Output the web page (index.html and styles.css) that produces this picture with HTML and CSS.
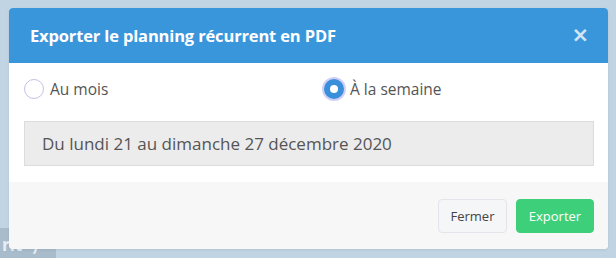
FILE: index.html
```html
<!DOCTYPE html>
<html lang="fr">
<head>
<meta charset="utf-8">
<link rel="stylesheet" href="styles.css">
</head>
<body>
<div class="backdrop-text">rit -)</div>
<div class="modal">
  <div class="modal-header">
    <h1 class="modal-title">Exporter le planning récurrent en PDF</h1>
    <span class="close">&times;</span>
  </div>
  <div class="modal-body">
    <div class="radios">
      <label class="radio"><span class="dot"></span>Au mois</label>
      <label class="radio"><span class="dot checked"></span>À la semaine</label>
    </div>
    <div class="field">Du lundi 21 au dimanche 27 décembre 2020</div>
  </div>
  <div class="modal-footer">
    <button class="btn btn-light">Fermer</button>
    <button class="btn btn-success">Exporter</button>
  </div>
</div>
</body>
</html>
```

FILE: styles.css
```css
html, body {
  margin: 0;
  padding: 0;
}
body {
  width: 616px;
  height: 258px;
  background: #c0d4e3;
  font-family: "Open Sans", "Noto Sans", sans-serif;
  position: relative;
  overflow: hidden;
  padding-top: 8px;
  box-sizing: border-box;
}
.backdrop-text {
  position: absolute;
  left: 0;
  top: 228px;
  width: 56px;
  height: 30px;
  background: #a8bccc;
  color: #e6eef4;
  font-size: 17px;
  font-weight: 700;
  line-height: 34px;
  padding-left: 2px;
  box-sizing: border-box;
  overflow: hidden;
}
.modal {
  position: relative;
  margin-left: 9px;
  width: 599px;
  background: #fff;
  border-radius: 4px;
  overflow: hidden;
  box-shadow: 0 1px 3px rgba(0,0,0,0.08);
}
.modal-header {
  height: 55px;
  background: #3a96db;
  display: flex;
  align-items: center;
  justify-content: space-between;
  padding: 0 19px 0 21px;
  box-sizing: border-box;
}
.modal-title {
  margin: 0;
  color: #fff;
  font-size: 16.5px;
  font-weight: 700;
  letter-spacing: -0.15px;
}
.close {
  color: #d3e6f6;
  font-size: 21px;
  font-weight: 700;
  line-height: 1;
  font-family: "DejaVu Sans", sans-serif;
}
.modal-body {
  padding: 15px 14px 16px 15px;
}
.radios {
  display: grid;
  grid-template-columns: 300px 1fr;
  height: 22px;
  align-items: center;
}
.radio {
  display: flex;
  align-items: center;
  gap: 6px;
  color: #555;
  font-size: 15.5px;
}
.dot {
  width: 20px;
  height: 20px;
  border-radius: 50%;
  border: 1px solid #c3c1e6;
  box-sizing: border-box;
  background: #fff;
}
.dot.checked {
  border: 6px solid #3a8fda;
  background: #fff;
  box-shadow: 0 0 0 2px rgba(170, 170, 240, 0.55);
}
.field {
  margin-top: 21px;
  height: 45px;
  box-sizing: border-box;
  background: #ececec;
  border: 1px solid #dcdcdc;
  color: #555;
  font-size: 17px;
  display: flex;
  align-items: center;
  padding-left: 17px;
}
.modal-footer {
  height: 67px;
  background: #f7f7f7;
  display: flex;
  justify-content: flex-end;
  align-items: center;
  gap: 9px;
  padding: 0 14px 0 0;
  box-sizing: border-box;
}
.btn {
  font-family: "Open Sans", "Noto Sans", sans-serif;
  font-size: 13px;
  height: 34px;
  border-radius: 4px;
  box-sizing: border-box;
  cursor: pointer;
}
.btn-light {
  width: 69px;
  background: #f5f6f8;
  border: 1px solid #e3e5ea;
  color: #444;
}
.btn-success {
  width: 78px;
  background: #3ecf7a;
  border: 1px solid #3ecf7a;
  color: #fff;
}
```
